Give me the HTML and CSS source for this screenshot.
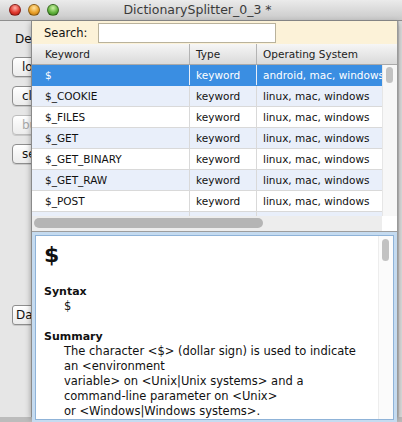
FILE: index.html
```html
<!DOCTYPE html>
<html>
<head>
    <link rel="stylesheet" href="styles.css">
</head>
<body>
    <div class="window">
        <div class="titlebar">
            <div class="lights">
                <span class="light red"></span>
                <span class="light yellow"></span>
                <span class="light green"></span>
            </div>
            <div class="title">DictionarySplitter_0_3 *</div>
        </div>

        <div class="main">
            <div class="side">
                <div class="label">Destination:</div>
                <button class="btn">load</button>
                <button class="btn">clear</button>
                <button class="btn" disabled>build</button>
                <button class="btn">search</button>
                <button class="btn data">Data</button>
            </div>
            <div class="edge"></div>
        </div>
        <div class="statusbar"></div>

        <div class="popup">
            <div class="search">
                <span class="search-label">Search:</span>
                <input class="search-input" type="text">
            </div>

            <div class="table">
                <div class="thead">
                    <div class="th col-key">Keyword</div>
                    <div class="th col-type">Type</div>
                    <div class="th col-os">Operating System</div>
                </div>
                <div class="tbody">
                    <div class="rows">
                        <div class="row selected">
                            <div class="td col-key">$</div>
                            <div class="td col-type">keyword</div>
                            <div class="td col-os">android, mac, windows</div>
                        </div>
                        <div class="row alt">
                            <div class="td col-key">$_COOKIE</div>
                            <div class="td col-type">keyword</div>
                            <div class="td col-os">linux, mac, windows</div>
                        </div>
                        <div class="row">
                            <div class="td col-key">$_FILES</div>
                            <div class="td col-type">keyword</div>
                            <div class="td col-os">linux, mac, windows</div>
                        </div>
                        <div class="row alt">
                            <div class="td col-key">$_GET</div>
                            <div class="td col-type">keyword</div>
                            <div class="td col-os">linux, mac, windows</div>
                        </div>
                        <div class="row">
                            <div class="td col-key">$_GET_BINARY</div>
                            <div class="td col-type">keyword</div>
                            <div class="td col-os">linux, mac, windows</div>
                        </div>
                        <div class="row alt">
                            <div class="td col-key">$_GET_RAW</div>
                            <div class="td col-type">keyword</div>
                            <div class="td col-os">linux, mac, windows</div>
                        </div>
                        <div class="row">
                            <div class="td col-key">$_POST</div>
                            <div class="td col-type">keyword</div>
                            <div class="td col-os">linux, mac, windows</div>
                        </div>
                        <div class="row alt">
                            <div class="td col-key">$_REQUEST</div>
                            <div class="td col-type">keyword</div>
                            <div class="td col-os">linux, mac, windows</div>
                        </div>
                    </div>
                    <div class="vscroll">
                        <div class="vthumb"></div>
                    </div>
                </div>
                <div class="hbar">
                    <div class="htrack"><div class="hthumb"></div></div>
                    <div class="corner"></div>
                </div>
            </div>

            <div class="detail">
                <div class="detail-inner">
                    <div class="doc">
                        <div class="doc-title">$</div>
                        <div class="doc-head">Syntax</div>
                        <div class="doc-text">$</div>
                        <div class="doc-head spaced">Summary</div>
                        <div class="doc-text">The character &lt;$&gt; (dollar sign) is used to indicate
an &lt;environment
variable&gt; on &lt;Unix|Unix systems&gt; and a
command-line parameter on &lt;Unix&gt;
or &lt;Windows|Windows systems&gt;.</div>
                    </div>
                    <div class="doc-scroll">
                        <div class="vthumb doc-thumb"></div>
                    </div>
                </div>
            </div>
        </div>
    </div>
</body>
</html>
```

FILE: styles.css
```css
body {
    margin: 0;
    padding: 0;
    font-family: 'DejaVu Sans', 'Liberation Sans', sans-serif;
    color: #111;
}
.window {
    position: relative;
    width: 402px;
    height: 422px;
    overflow: hidden;
    background: #e6e6e6;
    display: flex;
    flex-direction: column;
}
.titlebar {
    height: 20px;
    flex: none;
    display: flex;
    align-items: center;
    background: linear-gradient(#ebebeb, #c9c9c9);
    border-bottom: 1px solid #8f8f8f;
}
.lights {
    display: flex;
    gap: 7px;
    padding-left: 9px;
}
.light {
    width: 12px;
    height: 12px;
    border-radius: 50%;
    box-sizing: border-box;
    border: 1px solid rgba(0,0,0,0.35);
}
.red {
    background: radial-gradient(circle at 50% 30%, #ffb1a8, #e0392f 55%, #a8150d);
}
.yellow {
    background: radial-gradient(circle at 50% 30%, #ffe3a0, #e9a12a 55%, #b06a0a);
}
.green {
    background: radial-gradient(circle at 50% 30%, #cdf2a6, #63b33e 55%, #2f7a17);
}
.title {
    flex: 1;
    text-align: center;
    font-size: 12.5px;
    color: #3a3a3a;
    padding-right: 66px;
    line-height: 20px;
}
.main {
    flex: 1;
    display: flex;
}
.side {
    width: 80px;
    padding: 10px 0 0 12px;
    display: flex;
    flex-direction: column;
    align-items: flex-start;
    gap: 9px;
}
.label {
    font-size: 12px;
    line-height: 16px;
    padding-left: 3px;
    margin-bottom: 1px;
}
.btn {
    height: 20px;
    padding: 0 9px;
    font-family: 'DejaVu Sans', sans-serif;
    font-size: 12px;
    color: #111;
    background: linear-gradient(#ffffff, #ececec);
    border: 1px solid #8e8e8e;
    border-radius: 4px;
    box-shadow: 0 1px 0 rgba(0,0,0,0.12);
}
.btn[disabled] {
    color: #aaa;
    border-color: #bdbdbd;
}
.btn.data {
    margin-top: 132px;
    padding: 0 3px;
    border-radius: 3px;
}
.edge {
    margin-left: auto;
    width: 3px;
    border-left: 1px solid #c4c4c4;
    background: #dcdcdc;
}
.statusbar {
    height: 5px;
    flex: none;
    background: #bcbcbc;
}
.popup {
    position: absolute;
    left: 31px;
    top: 21px;
    width: 365px;
    height: 396px;
    background: #f0f0f0;
    border-left: 1px solid #8a8a8a;
    border-right: 1px solid #9a9a9a;
    box-shadow: 0 2px 6px rgba(0,0,0,0.35);
    display: flex;
    flex-direction: column;
}
.search {
    height: 23px;
    flex: none;
    display: flex;
    align-items: center;
    background: #fcf2d8;
    padding-left: 12px;
}
.search-label {
    font-size: 11.5px;
    width: 54px;
}
.search-input {
    width: 178px;
    height: 20px;
    box-sizing: border-box;
    border: 1px solid #b9b29c;
    background: #fff;
    margin: 0;
    padding: 0;
}
.table {
    height: 187px;
    flex: none;
    display: flex;
    flex-direction: column;
    font-size: 10.5px;
}
.thead {
    height: 20px;
    flex: none;
    display: flex;
    background: linear-gradient(#f6f6f6, #dadada);
    border-bottom: 1px solid #a9a9a9;
    line-height: 20px;
    color: #222;
}
.col-key {
    width: 157px;
    padding-left: 13px;
}
.col-type {
    width: 67px;
    padding-left: 6px;
}
.col-os {
    flex: 1;
    padding-left: 6px;
}
.th, .td {
    box-sizing: border-box;
    white-space: nowrap;
    overflow: hidden;
}
.th + .th {
    border-left: 1px solid #b3b3b3;
}
.tbody {
    height: 151px;
    flex: none;
    display: flex;
    overflow: hidden;
}
.rows {
    width: 350px;
    flex: none;
}
.row {
    height: 21px;
    box-sizing: border-box;
    display: flex;
    background: #fff;
    border-bottom: 1px solid #d9d9d9;
    line-height: 20px;
}
.row.alt {
    background: #e9effa;
}
.row.selected {
    background: #3a8ee2;
    color: #fff;
    border-bottom-color: #3a8ee2;
}
.td + .td {
    border-left: 1px solid #d9d9d9;
}
.row.selected .td + .td {
    border-left-color: #e7eef8;
}
.vscroll {
    flex: 1;
    background: #f7f7f7;
    border-left: 1px solid #e6e6e6;
}
.vthumb {
    width: 7px;
    height: 16px;
    margin: 2px 0 0 3px;
    border-radius: 4px;
    background: #c2c2c2;
}
.hbar {
    height: 15px;
    flex: none;
    display: flex;
}
.htrack {
    width: 350px;
    background: #ededed;
    padding-top: 2px;
    box-sizing: border-box;
}
.hthumb {
    width: 229px;
    height: 10px;
    margin-left: 2px;
    border-radius: 5px;
    background: #b5b5b5;
}
.corner {
    flex: 1;
    background: #fff;
}
.detail {
    flex: 1;
    border-top: 1px solid #9d9d9d;
    background: #c5dbf0;
    padding: 3px 3px 3px 3px;
    display: flex;
}
.detail-inner {
    flex: 1;
    display: flex;
    background: #fff;
    border: 1px solid #8fb3d8;
}
.doc {
    flex: 1;
    padding: 6px 0 0 8px;
    font-size: 11.5px;
    line-height: 15px;
}
.doc-title {
    font-size: 22px;
    font-weight: bold;
    line-height: 26px;
    margin-bottom: 16px;
}
.doc-head {
    font-size: 11px;
    font-weight: bold;
}
.doc-head.spaced {
    margin-top: 15px;
}
.doc-text {
    padding-left: 20px;
    white-space: pre-line;
}
.doc-scroll {
    width: 14px;
    background: #fbfbfb;
    border-left: 1px solid #ededed;
}
.doc-thumb {
    height: 22px;
    margin: 3px 0 0 3px;
}
```
